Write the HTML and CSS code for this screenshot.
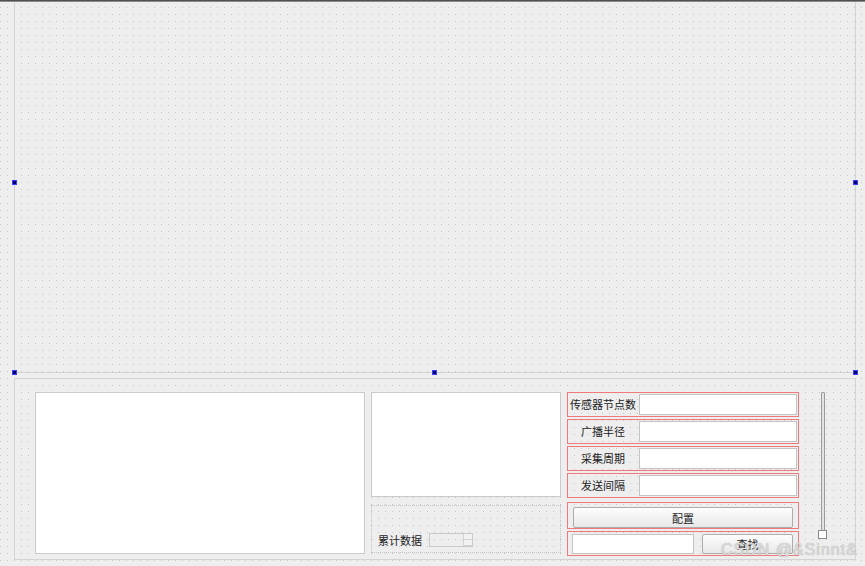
FILE: index.html
```html
<!DOCTYPE html>
<html lang="zh-CN">
<head>
  <meta charset="UTF-8">
  <title>传感器网络配置</title>
  <link rel="stylesheet" href="styles.css">
</head>
<body>
  <div class="window-top"></div>
  <div class="workspace">
    <!-- 绘图区（选中状态） -->
    <div class="plot-area">
      <span class="handle h-left"></span>
      <span class="handle h-right"></span>
      <span class="handle h-bl"></span>
      <span class="handle h-bm"></span>
      <span class="handle h-br"></span>
    </div>

    <div class="panel">
      <div class="log-box"></div>

      <div class="mid-col">
        <div class="text-box"></div>
        <div class="count-group">
          <span class="label">累计数据</span>
          <div class="spin">
            <span class="spin-arrows"><i></i><i></i></span>
          </div>
        </div>
      </div>

      <div class="form">
        <div class="form-row"><span class="form-label">传感器节点数</span><input class="line-edit"></div>
        <div class="form-row"><span class="form-label">广播半径</span><input class="line-edit"></div>
        <div class="form-row"><span class="form-label">采集周期</span><input class="line-edit"></div>
        <div class="form-row"><span class="form-label">发送间隔</span><input class="line-edit"></div>
        <div class="form-row btn-row"><button class="push wide">配置</button></div>
        <div class="form-row search-row"><input class="line-edit short"><button class="push">查找</button></div>
      </div>

      <div class="slider">
        <div class="groove"></div>
        <div class="knob"></div>
      </div>
    </div>
  </div>

  <div class="watermark">CSDN @&amp;Sinnt&amp;</div>
</body>
</html>
```

FILE: styles.css
```css
body {
  margin: 0;
  width: 865px;
  height: 566px;
  overflow: hidden;
  position: relative;
  font-family: "Noto Sans CJK SC", "Liberation Sans", sans-serif;
  font-size: 11px;
  color: #222;
  background-color: #eeeeee;
  background-image: conic-gradient(at 1px 1px, transparent 75%, #c6c6c6 0);
  background-size: 7px 7px;
}

.window-top {
  height: 1px;
  background: #4f4f4f;
  border-bottom: 1px solid #8a8a8a;
}

.workspace {
  padding-left: 14px;
}

.plot-area {
  position: relative;
  width: 840px;
  height: 370px;
  border: 1px solid #d3d3d3;
  border-top: none;
}

.handle {
  position: absolute;
  width: 3px;
  height: 3px;
  background: #00006e;
  border: 1px solid #3d3dff;
}
.h-left { left: -3px; top: 178px; }
.h-right { right: -3px; top: 178px; }
.h-bl { left: -3px; bottom: -3px; }
.h-bm { left: 417px; bottom: -3px; }
.h-br { right: -3px; bottom: -3px; }

.panel {
  display: flex;
  width: 820px;
  height: 167px;
  margin-top: 5px;
  padding: 13px 0 0 20px;
  border: 1px solid #d3d3d3;
}

.log-box {
  width: 328px;
  height: 160px;
  background: #fff;
  border: 1px solid #cbcbcb;
}

.mid-col {
  display: flex;
  flex-direction: column;
  gap: 8px;
  width: 190px;
  margin-left: 6px;
}

.text-box {
  height: 103px;
  background: #fff;
  border: 1px solid #cbcbcb;
}

.count-group {
  display: flex;
  align-items: flex-end;
  gap: 7px;
  height: 41px;
  padding: 0 0 5px 6px;
  border: 1px dotted #c4c4c4;
}

.label {
  line-height: 14px;
}

.spin {
  display: flex;
  justify-content: flex-end;
  width: 42px;
  height: 12px;
  border: 1px solid #c9c9c9;
}
.spin-arrows {
  display: flex;
  flex-direction: column;
  width: 8px;
  border-left: 1px solid #d4d4d4;
}
.spin-arrows i {
  flex: 1;
  border-bottom: 1px solid #d4d4d4;
  background: #f2f2f2;
}

.form {
  display: flex;
  flex-direction: column;
  gap: 2px;
  width: 232px;
  margin-left: 6px;
}

.form-row {
  display: flex;
  gap: 2px;
  height: 21px;
  padding: 1px;
  border: 1px solid #f07a7a;
}

.form-label {
  width: 68px;
  text-align: center;
  line-height: 21px;
}

.line-edit {
  box-sizing: border-box;
  width: 158px;
  height: 21px;
  margin: 0;
  padding: 0;
  background: #fff;
  border: 1px solid #c4c4c4;
}

.btn-row {
  margin-top: 2px;
  padding: 4px 5px 0;
}

.search-row {
  gap: 8px;
  padding: 2px 5px 0 4px;
}
.line-edit.short {
  width: 122px;
  height: 20px;
}

.push {
  width: 91px;
  height: 20px;
  padding: 0;
  font-family: "Noto Sans CJK SC", sans-serif;
  font-size: 11px;
  color: #222;
  background: linear-gradient(#fdfdfd, #e8e8e8);
  border: 1px solid #acacac;
  border-radius: 2px;
}
.push.wide {
  width: 220px;
  height: 21px;
}

.slider {
  width: 9px;
  margin-left: 19px;
}
.groove {
  width: 2px;
  height: 137px;
  margin-left: 3px;
  background: #e2e2e2;
  border: 1px solid #9c9c9c;
  border-radius: 1px;
}
.knob {
  width: 7px;
  height: 7px;
  margin-top: -1px;
  background: #fff;
  border: 1px solid #8a8a8a;
}

.watermark {
  position: absolute;
  left: 721px;
  top: 541px;
  font-family: "Liberation Sans", sans-serif;
  font-size: 16px;
  letter-spacing: 1px;
  color: #dcdcdc;
  text-shadow: 0 0 1px #9a9a9a;
}
```
